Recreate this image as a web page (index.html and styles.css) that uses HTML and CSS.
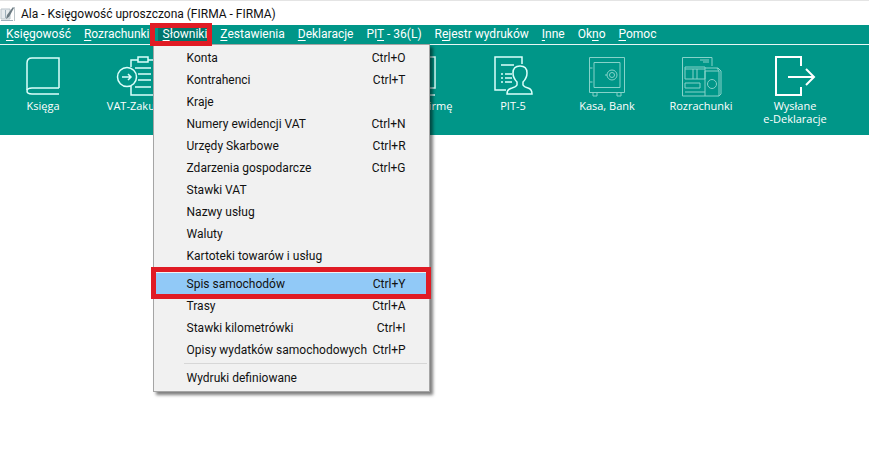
FILE: index.html
```html
<!DOCTYPE html>
<html lang="pl">
<head>
  <meta charset="UTF-8">
  <meta name="viewport" content="width=device-width, initial-scale=1.0">
  <title>Ala - Księgowość uproszczona</title>
  <link rel="stylesheet" href="styles.css">
</head>
<body>
  <header class="titlebar">
    <svg class="app-icon" viewBox="0 0 16 16" width="16" height="16">
      <path d="M1 3h9v10H1z" fill="#e6ebee" stroke="#b9c3c9"/>
      <path d="M5.500 4v8M1 14.500h12" stroke="#9fb0bb" fill="none"/>
      <path d="M13 1l1 1-5 9-3 2 1-4z" fill="#6b7a82"/>
      <path d="M14.500 1v14" stroke="#bcc5c9"/>
    </svg>
    <h1>Ala - Księgowość uproszczona (FIRMA - FIRMA)</h1>
  </header>

  <nav class="menubar">
    <button type="button"><u>K</u>sięgowość</button>
    <button type="button"><u>R</u>ozrachunki</button>
    <div class="menu-wrap">
      <button type="button" class="active"><u>S</u>łowniki</button>
      <div class="dropdown">
        <button type="button"><span>Konta</span><span>Ctrl+O</span></button>
        <button type="button"><span>Kontrahenci</span><span>Ctrl+T</span></button>
        <button type="button"><span>Kraje</span></button>
        <button type="button"><span>Numery ewidencji VAT</span><span>Ctrl+N</span></button>
        <button type="button"><span>Urzędy Skarbowe</span><span>Ctrl+R</span></button>
        <button type="button"><span>Zdarzenia gospodarcze</span><span>Ctrl+G</span></button>
        <button type="button"><span>Stawki VAT</span></button>
        <button type="button"><span>Nazwy usług</span></button>
        <button type="button"><span>Waluty</span></button>
        <button type="button"><span>Kartoteki towarów i usług</span></button>
        <hr>
        <button type="button" class="selected"><span>Spis samochodów</span><span>Ctrl+Y</span></button>
        <button type="button"><span>Trasy</span><span>Ctrl+A</span></button>
        <button type="button"><span>Stawki kilometrówki</span><span>Ctrl+I</span></button>
        <button type="button"><span>Opisy wydatków samochodowych</span><span>Ctrl+P</span></button>
        <hr>
        <button type="button"><span>Wydruki definiowane</span></button>
      </div>
    </div>
    <button type="button"><u>Z</u>estawienia</button>
    <button type="button"><u>D</u>eklaracje</button>
    <button type="button">PI<u>T</u> - 36(L)</button>
    <button type="button">R<u>e</u>jestr wydruków</button>
    <button type="button"><u>I</u>nne</button>
    <button type="button">Ok<u>n</u>o</button>
    <button type="button"><u>P</u>omoc</button>
  </nav>

  <div class="toolbar">
    <button type="button">
      <svg viewBox="0 0 40 40">
        <path d="M36 32V2H9Q4 2 4 7V34"/>
        <path d="M36 32H9Q4 32 4 35T9 38H36"/>
      </svg>
      <span>Księga</span>
    </button>
    <button type="button">
      <svg viewBox="0 0 40 40">
        <path d="M14 11V4H21M31 4H38V39H14V30M21 1h10v5h-10zM18 12h16M21 18h13M21 24h13M18 31h16"/>
        <circle cx="10" cy="21" r="9.500"/>
        <path d="M5 21h9M11 18l3 3-3 3"/>
      </svg>
      <span>VAT-Zakupy</span>
    </button>
    <button type="button">
      <svg viewBox="0 0 40 40">
        <path d="M6 3h28v35H6zM12 12h16M12 20h16M12 28h16"/>
      </svg>
      <span>VAT-Sprzedaż</span>
    </button>
    <button type="button">
      <svg viewBox="0 0 40 40">
        <path d="M6 3h28v35H6zM12 12h16M12 20h16M12 28h16"/>
      </svg>
      <span>Kontrahenci</span>
    </button>
    <button type="button">
      <svg viewBox="0 0 40 40">
        <path d="M3 1h33v31H3zM3 39h33"/>
      </svg>
      <span>Dane o firmę</span>
    </button>
    <button type="button">
      <svg viewBox="0 0 40 40">
        <path d="M29 8V1H2V34H13M8 9h13M8 18h2M8 22h2M8 26h2M12 18h7M12 22h7M12 26h7"/>
        <path d="M24 29V26Q20 22 20 17 20 10 27 10T34 17Q34 22 30 26V29Q31 31 35 32 39 33 39 38H14Q14 33 19 32 23 31 24 29z"/>
      </svg>
      <span>PIT-5</span>
    </button>
    <button type="button">
      <svg class="faded" viewBox="0 0 40 40">
        <path d="M2.500 1.500h35v35h-35zM7 6.500h26v25H7zM6 37v3h4v-3M30 37v3h4v-3M2.500 12h3M2.500 26h3"/>
        <circle cx="25" cy="19" r="5"/>
        <circle cx="25" cy="19" r="2.500"/>
        <path d="M18 19h2"/>
      </svg>
      <span>Kasa, Bank</span>
    </button>
    <button type="button">
      <svg class="faded" viewBox="0 0 40 40">
        <path d="M31 10V1.500H1.500V40H24M19 4h9M22 6h6M4 11h20v12H4zM4 13h20M12 13v10M16 13v10M4 27h15v5H4zM4 36h20"/>
        <path d="M24 12h13l3 3v23l-2 2M24 15h14v25H24zM38 15l-2-3"/>
        <circle cx="31" cy="28" r="4.500"/>
      </svg>
      <span>Rozrachunki</span>
    </button>
    <button type="button">
      <svg class="bold" viewBox="0 0 40 40">
        <path d="M26 10V1H1V39H26V31M13 21H39M31 13l8 8-8 8"/>
      </svg>
      <span>Wysłane<br>e-Deklaracje</span>
    </button>
  </div>

  <main class="workspace"></main>
</body>
</html>
```
FILE: styles.css
```css
*, *::before, *::after {
  margin: 0;
  padding: 0;
  box-sizing: border-box;
}

body {
  display: flex;
  flex-direction: column;
  min-height: 100vh;
  font-family: Roboto, "Open Sans", sans-serif;
  font-size: 12px;
  background-color: #fff;
  color: #111;
}

button {
  font: inherit;
  color: inherit;
  background: none;
  border: none;
  white-space: nowrap;
}

.titlebar {
  display: flex;
  align-items: center;
  gap: 5px;
  height: 25px;
  padding-top: 2px;
  border-top: 1px solid #e4e4e4;
}

.titlebar h1 {
  font-size: 12px;
  font-weight: normal;
}

.menubar {
  display: flex;
  gap: 3px;
  height: 20px;
  padding-left: 1px;
  background-color: #009688;
  border-bottom: 1px solid #e8f6f4;
  color: #fff;
}

.menubar > button,
.menu-wrap > button {
  height: 18px;
  padding: 0 5px;
  line-height: 18px;
}

.menubar u {
  text-underline-offset: 2px;
}

.menu-wrap {
  position: relative;
}

.menu-wrap > .active {
  background-color: #00766c;
}

/* red frames */
.active::after,
.selected::after {
  content: "";
  position: absolute;
  border: 5px solid #e01b24;
  z-index: 2;
}

.active::after {
  inset: -2px 0 -2px -8px;
}

.dropdown {
  position: absolute;
  top: 19px;
  left: -5px;
  z-index: 1;
  width: 277px;
  padding: 2px;
  background-color: #f1f1f1;
  border: 1px solid #a5a5a5;
  box-shadow: 3px 3px 3px rgba(0, 0, 0, 0.5);
  color: #111;
}

.dropdown button {
  display: flex;
  justify-content: space-between;
  position: relative;
  width: 100%;
  height: 22px;
  padding: 0 21px 0 31px;
  line-height: 22px;
}

.dropdown .selected {
  background-color: #91c9f7;
}

.selected::after {
  inset: -6px -4px -4px -5px;
}

.dropdown hr {
  margin: 2px 0 3px 28px;
  border: none;
  border-top: 1px solid #d7d7d7;
}

.toolbar {
  display: flex;
  gap: 8px;
  height: 90px;
  padding-top: 11px;
  background-color: #009688;
  color: #fff;
}

.toolbar button {
  display: flex;
  flex-direction: column;
  align-items: center;
  gap: 3px;
  flex: 0 0 86px;
  font-family: "Open Sans", sans-serif;
  font-size: 11px;
  line-height: 13px;
}

.toolbar svg {
  width: 40px;
  height: 40px;
  fill: none;
  stroke: #dcfffb;
  stroke-width: 1.5;
  overflow: visible;
}

.toolbar .faded {
  stroke: #86d2c9;
  stroke-width: 1;
}

.toolbar .bold {
  stroke: #fff;
  stroke-width: 2;
}

.workspace {
  flex: 1;
  background-color: #fff;
}
```
